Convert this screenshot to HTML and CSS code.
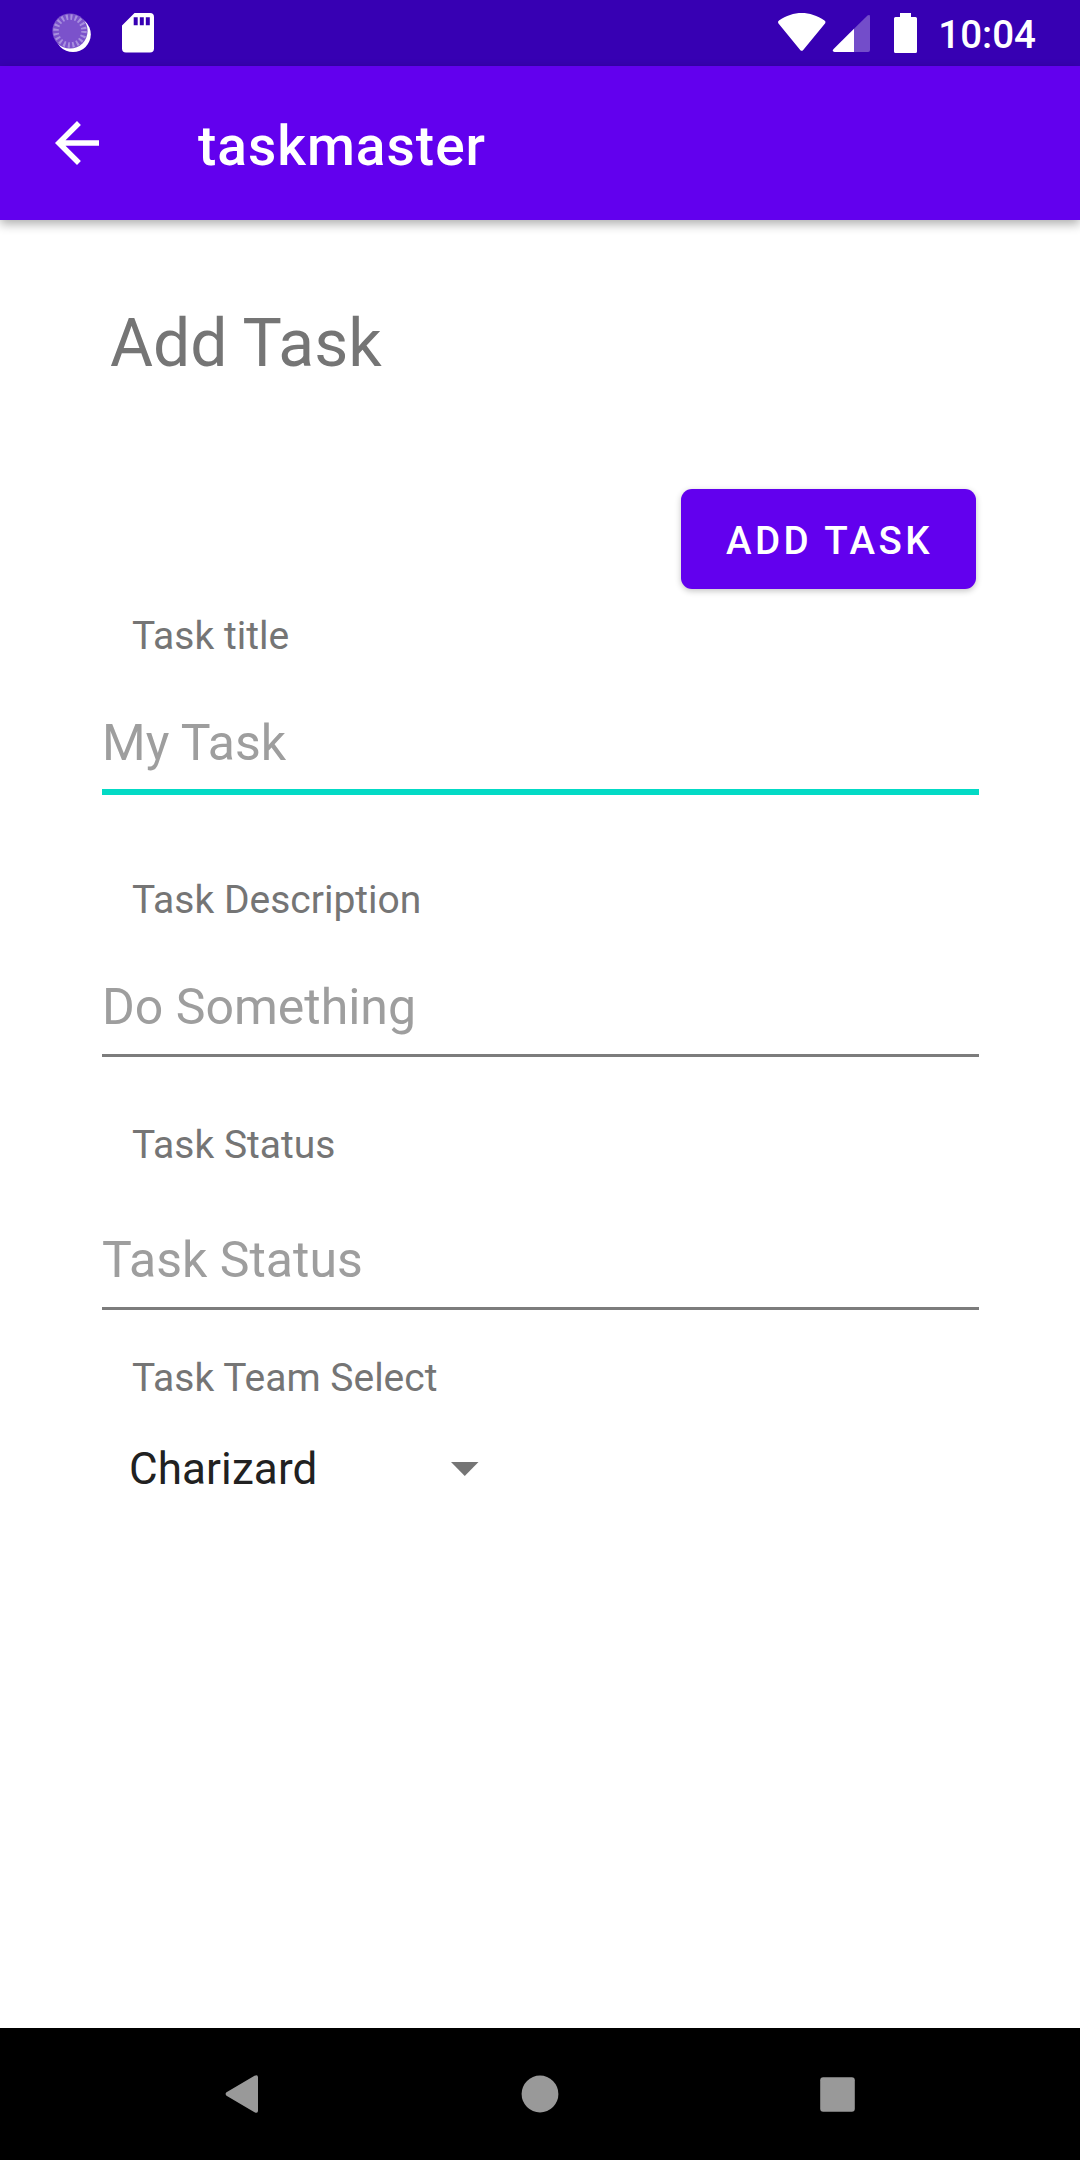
FILE: index.html
```html
<!DOCTYPE html>
<html lang="en">
<head>
<meta charset="utf-8">
<title>taskmaster</title>
<link rel="stylesheet" href="styles.css">
</head>
<body>
<div class="screen">
  <div class="status-bar">
    <div class="status-left">
      <svg width="40" height="42" viewBox="51 13 40 42">
        <circle cx="73" cy="34.3" r="17.8" fill="#fff"/>
        <circle cx="70" cy="31" r="17.6" fill="#7b52cb"/>
        <circle cx="70" cy="31" r="14" fill="none" stroke="#a88fdf" stroke-width="5.500" stroke-dasharray="2 2.398"/>
      </svg>
      <svg width="32" height="40" viewBox="0 0 32 40">
        <path fill="#fff" fill-rule="evenodd" d="M12.5 0H28q4 0 4 4v31.500q0 4-4 4H4q-4 0-4-4V12.500zM11.700 4.200v8h4v-8zm6.100 0v8h4v-8zm6 0v8h4v-8z"/>
      </svg>
    </div>
    <div class="status-right">
      <svg width="140" height="40" viewBox="777 13 140 40" fill="#fff">
        <path d="M778.300 23.200q-1-1.700.7-2.700C786 15.600 794 13 801.700 13s15.700 2.600 22.800 7.500q1.700 1 .7 2.700L803.200 50q-1.500 1.700-3 0z"/>
        <path d="M854 28.700 867.500 15.400q2.500-1.300 2.500 1V50q0 2-2 2h-14z" opacity=".3"/>
        <path d="M854 28.700V52h-19.500q-3-.6-.9-3z"/>
        <path d="M900 13h11v4h4.500q1.500 0 1.500 1.500v33q0 1.500-1.500 1.500h-20q-1.500 0-1.500-1.500v-33q0-1.500 1.500-1.500h4.500z"/>
      </svg>
      <span class="clock">10:04</span>
    </div>
  </div>
  <header class="app-bar">
    <svg width="66" height="66" viewBox="0 0 24 24"><path fill="#fff" d="M20 11H7.830l5.590-5.590L12 4l-8 8 8 8 1.410-1.410L7.830 13H20z"/></svg>
    <h1 class="app-title">taskmaster</h1>
  </header>
  <main class="form">
    <h2 class="heading">Add Task</h2>
    <button class="add-button" type="button">ADD TASK</button>
    <label class="label" for="title">Task title</label>
    <input class="field field-active" id="title" placeholder="My Task">
    <label class="label label-description" for="description">Task Description</label>
    <input class="field" id="description" placeholder="Do Something">
    <label class="label label-status" for="status">Task Status</label>
    <input class="field field-status" id="status" placeholder="Task Status">
    <span class="label label-team">Task Team Select</span>
    <div class="spinner">
      <span>Charizard</span>
      <svg width="28" height="14" viewBox="0 0 28 14"><path fill="#757575" d="M0 0h27.500L13.750 14z"/></svg>
    </div>
  </main>
  <nav class="nav-bar">
    <svg width="34" height="38" viewBox="0 0 34 38"><path fill="#999" d="M1.500 17.300 29.500.8q3.500-1.500 3.500 1.500v33.400q0 3-3.500 1.500L1.500 20.700q-1.800-1.700 0-3.400z"/></svg>
    <svg width="38" height="38" viewBox="0 0 38 38"><circle cx="19" cy="19" r="18.400" fill="#999"/></svg>
    <svg width="35" height="35" viewBox="0 0 35 35"><rect x=".2" y=".2" width="34.600" height="34.600" rx="3" fill="#999"/></svg>
  </nav>
</div>
</body>
</html>
```
FILE: styles.css
```css
* { box-sizing: border-box; }

body {
  margin: 0;
  background: #fff;
  font-family: Roboto, sans-serif;
  font-size: 39px;
}

svg { display: block; flex: none; }

.screen {
  display: flex;
  flex-direction: column;
  height: 2160px;
  width: 1080px;
}

.status-bar {
  display: flex;
  justify-content: space-between;
  height: 66px;
  padding: 13px 44px 0 51px;
  background: #3700b3;
}

.status-left { display: flex; gap: 31px; }
.status-right { display: flex; gap: 21px; }

.clock {
  color: #fff;
  font-size: 38.5px;
  font-weight: 500;
  line-height: 44px;
}

.app-bar {
  display: flex;
  align-items: center;
  gap: 88px;
  height: 154px;
  padding-left: 44px;
  background: #6200ee;
  box-shadow: 0 4px 10px rgba(0, 0, 0, 0.32);
}

.app-title {
  margin: 6px 0 0;
  color: #fff;
  font-size: 55px;
  font-weight: 500;
  line-height: 72px;
  letter-spacing: 1px;
}

.form {
  display: flex;
  flex: 1;
  flex-direction: column;
  align-items: flex-start;
  padding: 80px 101px 0 102px;
}

.heading {
  margin: 0 0 101px 8px;
  color: #757575;
  font-size: 66px;
  font-weight: 400;
  line-height: 88px;
}

.add-button {
  align-self: flex-end;
  width: 295px;
  height: 100px;
  margin: 0 3px 21px 0;
  padding: 3px 0 0 2px;
  border: 0;
  border-radius: 11px;
  background: #6200ee;
  box-shadow: 0 2px 6px rgba(0, 0, 0, 0.24);
  color: #fff;
  font: 500 38.5px Roboto, sans-serif;
  letter-spacing: 3.44px;
}

.label {
  margin: 0 0 48px 30px;
  color: #757575;
  line-height: 52px;
}

.label-description { margin-top: 79px; }
.label-status { margin: 62px 0 56px 30px; }
.label-team { margin: 42px 0 35px 30px; }

.field {
  width: 877px;
  height: 83px;
  padding: 0 0 14px;
  border: 0;
  border-bottom: 3px solid #7c7c7c;
  background: none;
  color: #212121;
  font: 50px/66px Roboto, sans-serif;
  outline: none;
}

.field::placeholder { color: #9e9e9e; opacity: 1; }

.field-active {
  height: 85px;
  padding-bottom: 13px;
  border-bottom: 6px solid #03dac5;
}

.spinner {
  display: flex;
  align-items: center;
  justify-content: space-between;
  width: 350px;
  margin-left: 27px;
  color: #212121;
  font-size: 44px;
  line-height: 60px;
  letter-spacing: 0.1px;
}

.nav-bar {
  display: flex;
  align-items: center;
  justify-content: space-between;
  height: 132px;
  padding: 0 225px;
  background: #000;
}
```
